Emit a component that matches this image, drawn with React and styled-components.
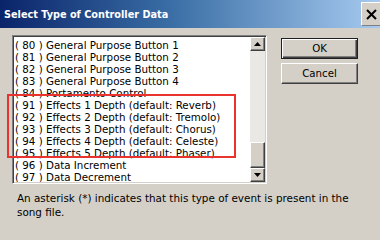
import React from "react";
import styled, { createGlobalStyle } from "styled-components";

const GlobalStyle = createGlobalStyle`
  html, body { margin: 0; padding: 0; background: #d4d0c8; }
  * { box-sizing: border-box; }
`;

const Window = styled.div`
  position: relative;
  width: 380px;
  height: 236px;
  overflow: hidden;
  background: #d4d0c8;
  display: flex;
  flex-direction: column;
  font-family: "DejaVu Sans", Verdana, sans-serif;
  color: #000;
`;

const TitleBar = styled.div`
  height: 28px;
  flex: none;
  display: flex;
  align-items: center;
  justify-content: space-between;
  padding-left: 4px;
  background: linear-gradient(to right, #0a246a 0%, #3a6ea5 45%, #a6caf0 100%);
`;

const Title = styled.div`
  font-family: "DejaVu Sans Condensed", "Liberation Sans", Arial, sans-serif;
  font-weight: bold;
  font-size: 10.8px;
  color: #fff;
  padding-top: 1px;
`;

const CloseButton = styled.div`
  width: 21px;
  height: 24px;
  margin-right: -2px;
  align-self: flex-start;
  margin-top: 2px;
  background: #d4d0c8;
  border-top: 1px solid #fff;
  border-left: 1px solid #fff;
  border-bottom: 1px solid #808080;
  display: flex;
  align-items: center;
  justify-content: center;
  padding-right: 2px;
`;

const Body = styled.div`
  display: flex;
  align-items: flex-start;
  padding: 7px 0 0 12px;
  gap: 14px;
`;

const ListBox = styled.div`
  width: 255px;
  height: 149px;
  background: #fff;
  border-top: 1px solid #808080;
  border-left: 1px solid #808080;
  border-right: 1px solid #fff;
  border-bottom: 1px solid #fff;
  box-shadow: inset 1px 1px 0 #404040, inset -1px -1px 0 #d4d0c8;
  display: flex;
  padding: 1px;
`;

const Items = styled.div`
  flex: 1;
  padding: 2px 0 0 1px;
  overflow: hidden;
`;

const Item = styled.div`
  height: 12px;
  line-height: 12px;
  font-size: 10.3px;
  white-space: pre;
  color: #000;
`;

const ScrollBar = styled.div`
  width: 15px;
  display: flex;
  flex-direction: column;
  background: #eae8e4;
`;

const ScrollButton = styled.div`
  height: ${(p) => p.$h}px;
  flex: none;
  background: #d4d0c8;
  border-top: 1px solid #fff;
  border-left: 1px solid #fff;
  border-right: 1px solid #404040;
  border-bottom: 1px solid #404040;
  box-shadow: inset -1px -1px 0 #808080;
  display: flex;
  align-items: center;
  justify-content: center;
`;

const Track = styled.div`
  flex: 1;
  background: #eae8e4;
`;

const Buttons = styled.div`
  display: flex;
  flex-direction: column;
  gap: 4px;
  padding-top: 3px;
`;

const Button = styled.div`
  width: 77px;
  height: 21px;
  display: flex;
  align-items: center;
  justify-content: center;
  font-size: 10.2px;
  background: #d4d0c8;
  border: 1px solid;
  border-color: ${(p) =>
    p.$default ? "#202020" : "#fff #404040 #404040 #fff"};
  box-shadow: ${(p) =>
    p.$default
      ? "inset 1px 1px 0 #fff, inset -1px -1px 0 #404040, inset -2px -2px 0 #808080"
      : "inset -1px -1px 0 #808080"};
`;

const Note = styled.p`
  margin: 7px 0 0 17px;
  font-size: 10.4px;
  line-height: 14px;
`;

const Highlight = styled.div`
  position: absolute;
  left: 7px;
  top: 94px;
  width: 229px;
  height: 64px;
  border: 2.5px solid #e8332f;
  pointer-events: none;
`;

const Arrow = ({ up }) => (
  <svg width="7" height="4" viewBox="0 0 7 4">
    <path d={up ? "M3.5 0 L7 4 L0 4 Z" : "M0 0 L7 0 L3.5 4 Z"} fill="#000" />
  </svg>
);

const items = [
  "( 80 ) General Purpose Button 1",
  "( 81 ) General Purpose Button 2",
  "( 82 ) General Purpose Button 3",
  "( 83 ) General Purpose Button 4",
  "( 84 ) Portamento Control",
  "( 91 ) Effects 1 Depth (default: Reverb)",
  "( 92 ) Effects 2 Depth (default: Tremolo)",
  "( 93 ) Effects 3 Depth (default: Chorus)",
  "( 94 ) Effects 4 Depth (default: Celeste)",
  "( 95 ) Effects 5 Depth (default: Phaser)",
  "( 96 ) Data Increment",
  "( 97 ) Data Decrement",
];

export default function App() {
  return (
    <>
      <GlobalStyle />
      <Window>
        <TitleBar>
          <Title>Select Type of Controller Data</Title>
          <CloseButton>
            <svg width="11" height="11" viewBox="0 0 11 11">
              <path d="M1 1 L10 10 M10 1 L1 10" stroke="#000" strokeWidth="2" />
            </svg>
          </CloseButton>
        </TitleBar>
        <Body>
          <ListBox>
            <Items>
              {items.map((t) => (
                <Item key={t}>{t}</Item>
              ))}
            </Items>
            <ScrollBar>
              <ScrollButton $h={14}>
                <Arrow up />
              </ScrollButton>
              <Track />
              <ScrollButton $h={26} />
              <ScrollButton $h={14}>
                <Arrow />
              </ScrollButton>
            </ScrollBar>
          </ListBox>
          <Buttons>
            <Button $default>OK</Button>
            <Button>Cancel</Button>
          </Buttons>
        </Body>
        <Note>
          An asterisk (*) indicates that this type of event is present in the
          <br />
          song file.
        </Note>
        <Highlight />
      </Window>
    </>
  );
}
